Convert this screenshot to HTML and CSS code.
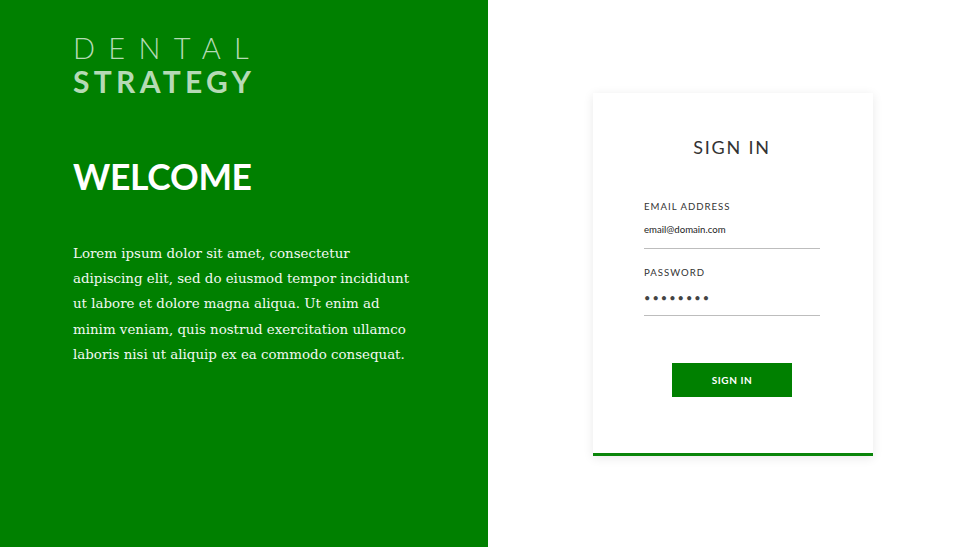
FILE: index.html
```html
<!DOCTYPE html>
<html>
<head>
<meta charset="utf-8">
<link rel="stylesheet" href="styles.css">
</head>
<body>
<div class="page">
  <section class="left">
    <div class="logo">
      <div class="logo-top">DENTAL</div>
      <div class="logo-bottom">STRATEGY</div>
    </div>
    <h1 class="welcome">WELCOME</h1>
    <p class="intro">Lorem ipsum dolor sit amet, consectetur adipiscing elit, sed do eiusmod tempor incididunt ut labore et dolore magna aliqua. Ut enim ad minim veniam, quis nostrud exercitation ullamco laboris nisi ut aliquip ex ea commodo consequat.</p>
  </section>
  <section class="right">
    <div class="card">
      <h2 class="card-title">SIGN IN</h2>
      <div class="field">
        <div class="label">EMAIL ADDRESS</div>
        <div class="value">email@domain.com</div>
      </div>
      <div class="field">
        <div class="label">PASSWORD</div>
        <div class="value dots">••••••••</div>
      </div>
      <div class="btn-row"><button class="btn">SIGN IN</button></div>
    </div>
  </section>
</div>
</body>
</html>
```
FILE: styles.css
```css
* { box-sizing: border-box; }
html, body { margin: 0; padding: 0; }
body { width: 973px; height: 547px; overflow: hidden; font-family: Lato, "Open Sans", sans-serif; background: #fff; }
.page { display: flex; height: 547px; }
.left { width: 488px; background: #008000; padding: 33px 0 0 73px; color: #fff; }
.logo-top { font-weight: 300; font-size: 29px; letter-spacing: 13.3px; color: #b5dab5; line-height: 30px; }
.logo-bottom { font-weight: 700; font-size: 30px; letter-spacing: 4.3px; color: #b5dab5; line-height: 34px; margin-top: 1px; }
.welcome { margin: 54px 0 0; font-size: 35.5px; font-weight: 700; line-height: 50px; letter-spacing: -0.3px; }
.intro { margin: 39px 0 0; width: 345px; font-family: "DejaVu Serif", serif; font-size: 13.4px; line-height: 25.2px; color: #f2f8f2; }
.right { flex: 1; padding: 93px 0 0 105px; }
.card { width: 280px; height: 363px; background: #fff; border-bottom: 3px solid #0a850a; box-shadow: 0 2px 10px rgba(0,0,0,0.09); padding: 43px 53px 0 51px; }
.card-title { margin: 0 0 43px; text-align: center; font-weight: 400; font-size: 18px; letter-spacing: 1.8px; color: #333; line-height: 22px; }
.field { margin-bottom: 18px; }
.label { font-size: 9.6px; letter-spacing: 1px; color: #333; line-height: 12px; }
.value { font-size: 9.6px; color: #222; line-height: 12px; margin-top: 11px; padding-bottom: 12px; border-bottom: 1.5px solid #bdbdbd; width: 176px; }
.dots { font-size: 11px; letter-spacing: 2px; margin-top: 13px; padding-bottom: 11px; color: #444; line-height: 12px; }
.btn-row { display: flex; justify-content: center; padding-top: 29px; }
.btn { width: 120px; height: 34px; border: none; background: #008000; color: #fff; font-family: Lato, sans-serif; font-weight: 700; font-size: 10px; letter-spacing: 0.6px; padding: 0; }
```
